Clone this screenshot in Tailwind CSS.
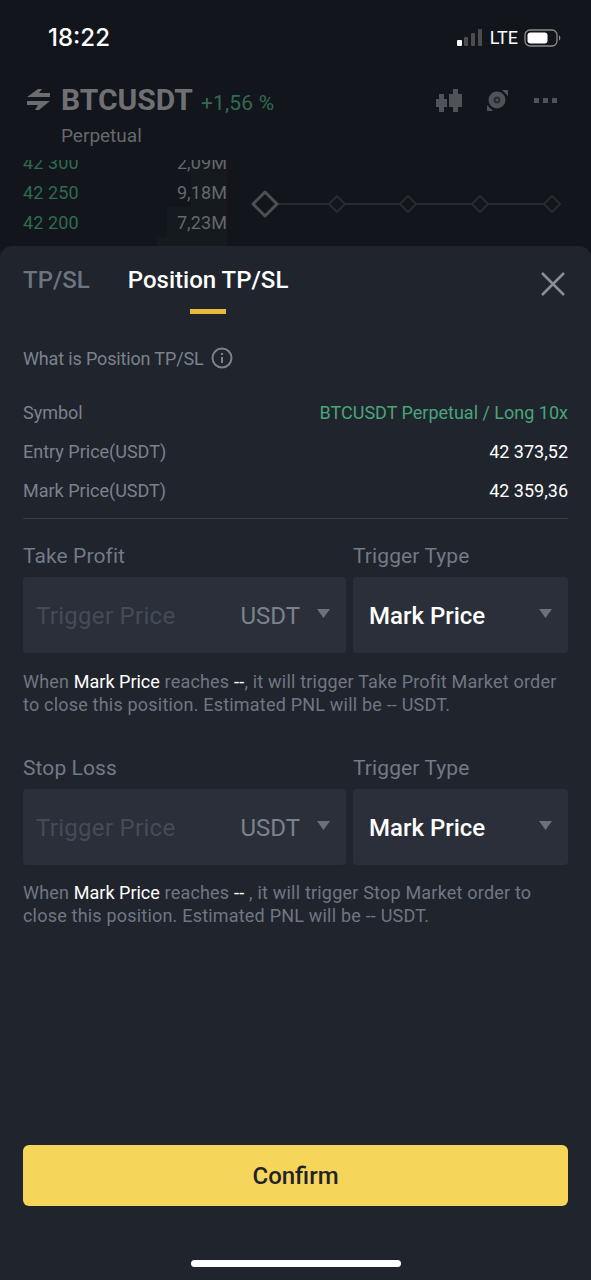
<!DOCTYPE html>
<html lang="en">
<head>
    <meta charset="UTF-8">
    <meta name="viewport" content="width=device-width, initial-scale=1.0">
    <title>Position TP/SL</title>
    <script src="https://cdn.jsdelivr.net/npm/@tailwindcss/browser@4"></script>
</head>
<body class="w-[591px] h-[1280px] overflow-hidden bg-[#12151b] font-['Roboto','Noto_Sans',sans-serif]">
    <!-- Background screen, dimmed -->
    <div class="h-[246px] overflow-hidden">
        <!-- Status bar -->
        <div class="h-[76px] pt-[23px] pl-[48px] pr-[29px] flex justify-between items-start">
            <span class="font-['Inter'] text-[24px] leading-[30px] font-medium text-white">18:22</span>
            <div class="flex items-center h-[20px] mt-[3px] pt-[3px]">
                <svg width="25" height="17" viewBox="0 0 25 17">
                    <rect x="0" y="11" width="5" height="6" rx="1" fill="#fff"/>
                    <rect x="7" y="8" width="4" height="9" rx="1" fill="#4a4c50"/>
                    <rect x="14" y="4" width="4" height="13" rx="1" fill="#4a4c50"/>
                    <rect x="21" y="0" width="4" height="17" rx="1" fill="#4a4c50"/>
                </svg>
                <span class="ml-[8px] font-['Roboto'] text-[18px] leading-[20px] text-white">LTE</span>
                <svg class="ml-[6px]" width="38" height="18" viewBox="0 0 38 18">
                    <rect x="1" y="1" width="32" height="16" rx="5" fill="none" stroke="#8a8a8a" stroke-width="1.300"/>
                    <rect x="3.500" y="3.500" width="20" height="11" rx="3" fill="#fff"/>
                    <path d="M35 6.500c1.800.500 1.800 4.500 0 5z" fill="#8a8a8a"/>
                </svg>
            </div>
        </div>

        <!-- Pair header -->
        <div class="h-[48px] flex pl-[26px] pr-[34px] items-center justify-between">
            <div class="flex items-center">
                <svg width="24" height="22" viewBox="0 0 24 22" class="mr-[11px]" fill="#6b6d70">
                    <path d="M1 8L12 0h4l-3 4h11v4z"/>
                    <path d="M24 12L13 21H9l3-5H1v-4z"/>
                </svg>
                <span class="text-[30px] font-bold text-[#6f7073] leading-[40px]">BTCUSDT</span>
                <span class="ml-[8px] mt-[8px] text-[21px] text-[#2f6b4e] tracking-[0.2px]">+1,56 %</span>
            </div>
            <div class="flex items-center gap-[25px]">
                <svg width="26" height="23" viewBox="0 0 26 23" fill="#4f5257">
                    <rect x="0" y="10" width="11" height="8"/>
                    <rect x="3" y="5" width="5" height="18"/>
                    <rect x="13" y="5" width="13" height="13"/>
                    <rect x="17" y="0" width="5" height="23"/>
                </svg>
                <svg width="21" height="22" viewBox="0 0 21 22">
                    <circle cx="10" cy="11" r="8.500" fill="#4f5257"/>
                    <circle cx="10" cy="11" r="3.500" fill="#2a2c31"/>
                    <circle cx="10" cy="11" r="1.300" fill="#4f5257"/>
                    <path d="M15 1h6v6zM0 16v6h6z" fill="#4f5257"/>
                </svg>
                <svg class="ml-[1px]" width="23" height="5" viewBox="0 0 23 5" fill="#4f5257">
                    <rect x="0" y="0" width="5" height="5"/>
                    <rect x="9" y="0" width="5" height="5"/>
                    <rect x="18" y="0" width="5" height="5"/>
                </svg>
            </div>
        </div>
        <div class="pl-[61px] text-[19px] leading-[24px] text-[#66686c]">Perpetual</div>

        <!-- Order book peek -->
        <div class="relative mt-[12px] h-[86px] overflow-hidden pl-[23px]">
            <!-- depth bars -->
            <div class="absolute left-[191px] top-0 w-[36px] h-[18px] bg-[#141a1e]"></div>
            <div class="absolute left-[191px] top-[18px] w-[36px] h-[29px] bg-[#141a1e]"></div>
            <div class="absolute left-[167px] top-[47px] w-[60px] h-[30px] bg-[#141a1e]"></div>
            <div class="absolute left-[157px] top-[77px] w-[70px] h-[9px] bg-[#141a1e]"></div>
            <div class="relative w-[204px] -mt-[12px] text-[18px] leading-[30px] tracking-[0.1px]">
                <div class="flex justify-between text-[#2f6b4e]"><span>42 300</span><span class="text-[#66686c]">2,09M</span></div>
                <div class="flex justify-between text-[#2f6b4e]"><span>42 250</span><span class="text-[#66686c]">9,18M</span></div>
                <div class="flex justify-between text-[#2f6b4e]"><span>42 200</span><span class="text-[#66686c]">7,23M</span></div>
            </div>
            <svg class="absolute left-[250px] top-[27px]" width="315" height="34" viewBox="0 0 315 34" fill="#12151b" stroke="#282b30" stroke-width="2" stroke-linejoin="round">
                <path d="M15 17H303"/>
                <path d="M15 5l12 12-12 12L3 17z" stroke="#4d4f53" stroke-width="3"/>
                <path d="M87 9l8 8-8 8-8-8zM158 9l8 8-8 8-8-8zM230 9l8 8-8 8-8-8zM302 9l8 8-8 8-8-8z"/>
            </svg>
        </div>
    </div>

    <!-- Bottom sheet -->
    <div class="h-[1034px] bg-[#20242d] rounded-t-[12px] flex flex-col px-[23px]">
        <!-- Tabs -->
        <div class="h-[67px] flex items-start justify-between">
            <div class="flex gap-[38px] pt-[17px]">
                <span class="text-[24px] leading-[34px] font-medium text-[#6c7480]">TP/SL</span>
                <div class="flex flex-col items-center">
                    <span class="text-[24px] leading-[34px] font-medium text-white">Position TP/SL</span>
                    <div class="w-[36px] h-[5px] mt-[12px] bg-[#eab93a]"></div>
                </div>
            </div>
            <svg class="mt-[26px] mr-[3px]" width="24" height="24" viewBox="0 0 24 24" fill="none" stroke="#8a8f98" stroke-width="2.500">
                <path d="M1 1l22 22M23 1L1 23"/>
            </svg>
        </div>

        <div class="mt-[34px] flex items-center gap-[8px] text-[18px] leading-[24px] text-[#7b828c] tracking-[-0.15px]">
            <span>What is Position TP/SL</span>
            <svg class="-ml-[1px] -mt-[2px]" width="22" height="22" viewBox="0 0 22 22" fill="none" stroke="#7b828c" stroke-width="2">
                <circle cx="11" cy="11" r="9.500"/>
                <path d="M11 10v6M11 6v2"/>
            </svg>
        </div>

        <!-- Position info -->
        <div class="mt-[30px] flex flex-col gap-[15px] text-[18px] leading-[24px] text-[#7b828c] pb-[15px] border-b border-[#383d48]">
            <div class="flex justify-between"><span>Symbol</span><span class="text-[#49a47a]">BTCUSDT Perpetual / Long 10x</span></div>
            <div class="flex justify-between"><span>Entry Price(USDT)</span><span class="text-white">42 373,52</span></div>
            <div class="flex justify-between"><span>Mark Price(USDT)</span><span class="text-white">42 359,36</span></div>
        </div>

        <!-- Take profit -->
        <div class="mt-[23px] flex gap-[7px] text-[21px] leading-[28px] text-[#727a85] tracking-[0.1px]">
            <span class="w-[323px]">Take Profit</span>
            <span>Trigger Type</span>
        </div>
        <div class="mt-[7px] flex gap-[7px]">
            <div class="w-[323px] h-[76px] rounded-[4px] bg-[#2a2f3a] flex items-center pl-[13px] pr-[16px] pt-[2px]">
                <span class="flex-1 text-[24px] text-[#454b57] tracking-[0.3px]">Trigger Price</span>
                <span class="text-[24px] text-[#7b828c]">USDT</span>
                <svg class="ml-[17px] mb-[6px]" width="13" height="9" viewBox="0 0 13 9" fill="#6b717c"><path d="M0 0h13L6.500 9z"/></svg>
            </div>
            <div class="w-[215px] h-[76px] rounded-[4px] bg-[#2a2f3a] flex items-center pl-[16px] pr-[16px] pt-[2px]">
                <span class="flex-1 text-[24px] text-white font-medium">Mark Price</span>
                <svg class="mb-[6px]" width="13" height="9" viewBox="0 0 13 9" fill="#6b717c"><path d="M0 0h13L6.500 9z"/></svg>
            </div>
        </div>
        <p class="mt-[17px] text-[18px] leading-[23px] text-[#6f7782] tracking-[0.2px]">When <span class="text-white tracking-normal">Mark Price</span> reaches <span class="text-white">--</span>, it will trigger Take Profit Market order to close this position. Estimated PNL will be -- USDT.</p>

        <!-- Stop loss -->
        <div class="mt-[38px] flex gap-[7px] text-[21px] leading-[28px] text-[#727a85] tracking-[0.1px]">
            <span class="w-[323px]">Stop Loss</span>
            <span>Trigger Type</span>
        </div>
        <div class="mt-[7px] flex gap-[7px]">
            <div class="w-[323px] h-[76px] rounded-[4px] bg-[#2a2f3a] flex items-center pl-[13px] pr-[16px] pt-[2px]">
                <span class="flex-1 text-[24px] text-[#454b57] tracking-[0.3px]">Trigger Price</span>
                <span class="text-[24px] text-[#7b828c]">USDT</span>
                <svg class="ml-[17px] mb-[6px]" width="13" height="9" viewBox="0 0 13 9" fill="#6b717c"><path d="M0 0h13L6.500 9z"/></svg>
            </div>
            <div class="w-[215px] h-[76px] rounded-[4px] bg-[#2a2f3a] flex items-center pl-[16px] pr-[16px] pt-[2px]">
                <span class="flex-1 text-[24px] text-white font-medium">Mark Price</span>
                <svg class="mb-[6px]" width="13" height="9" viewBox="0 0 13 9" fill="#6b717c"><path d="M0 0h13L6.500 9z"/></svg>
            </div>
        </div>
        <p class="mt-[16px] text-[18px] leading-[23px] text-[#6f7782] tracking-[0.2px]">When <span class="text-white tracking-normal">Mark Price</span> reaches <span class="text-white">--</span> , it will trigger Stop Market order to close this position. Estimated PNL will be -- USDT.</p>

        <!-- Confirm -->
        <button class="mt-auto h-[61px] w-full rounded-[6px] bg-[#f5d55a] text-[24px] font-medium text-[#1f2329]">Confirm</button>
        <div class="mt-[54px] mb-[13px] mx-auto w-[210px] h-[7px] rounded-full bg-white"></div>
    </div>
</body>
</html>
